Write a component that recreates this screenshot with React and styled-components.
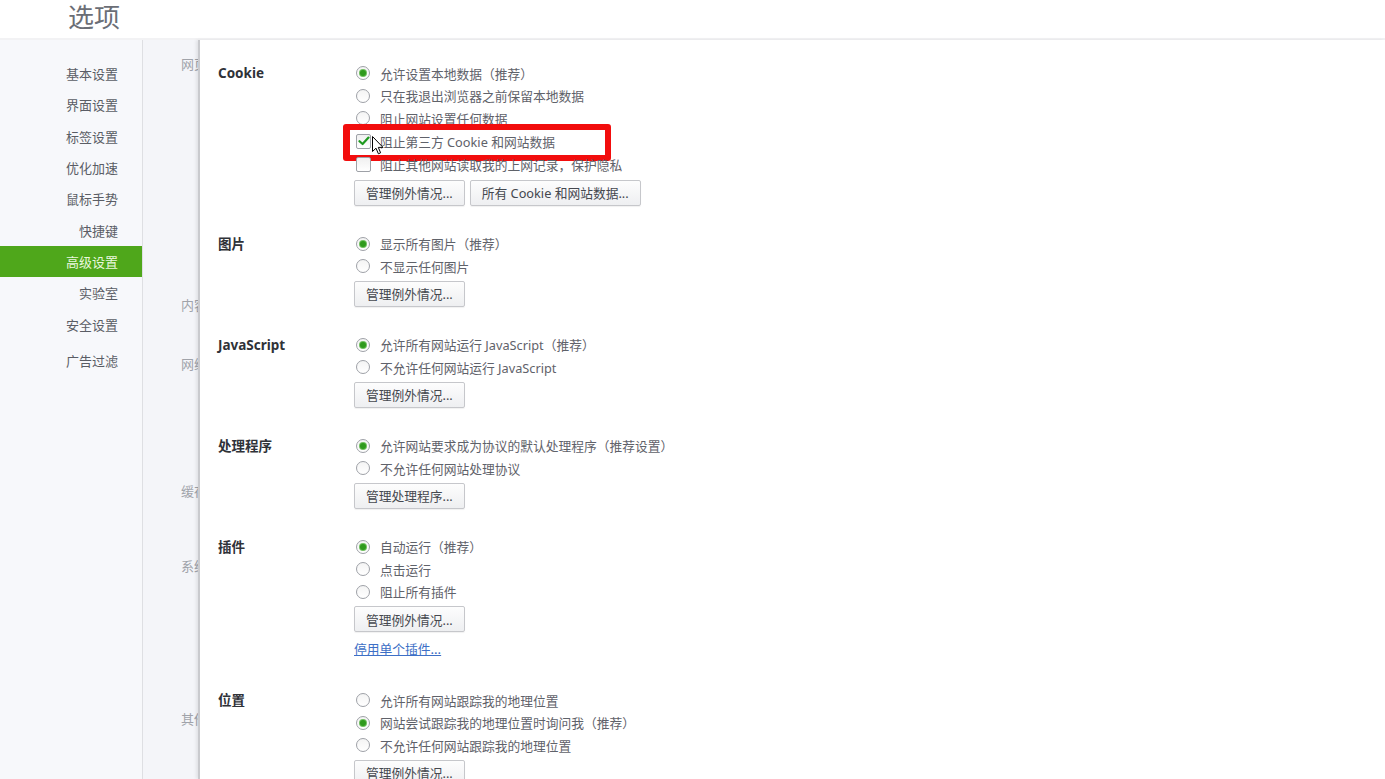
import React from "react";
import styled, { createGlobalStyle } from "styled-components";

const Global = createGlobalStyle`
  html, body { margin: 0; padding: 0; background: #fff; }
  body { font-family: "Noto Sans", "Noto Sans CJK SC", sans-serif; overflow: hidden; }
  * { box-sizing: border-box; }
`;

const Page = styled.div`
  width: 1385px;
  height: 779px;
  display: flex;
  flex-direction: column;
  overflow: hidden;
`;

const Header = styled.header`
  height: 40px;
  flex: none;
  border-bottom: 2px solid #f2f2f4;
  padding-left: 68px;
  display: flex;
  align-items: flex-start;
`;

const Title = styled.h1`
  margin: 0;
  font-weight: 400;
  font-size: 26px;
  line-height: 32px;
  color: #6b6e76;
  font-family: "Noto Sans CJK SC", sans-serif;
`;

const Body = styled.div`
  flex: 1;
  display: flex;
  min-height: 0;
`;

const Sidebar = styled.nav`
  width: 143px;
  flex: none;
  background: #f7f8fb;
  border-right: 1px solid #dedfe3;
  padding-top: 18px;
  display: flex;
  flex-direction: column;
`;

const NavItem = styled.div`
  height: 31.3px;
  flex: none;
  display: flex;
  align-items: center;
  justify-content: flex-end;
  padding-right: 24px;
  font-size: 13px;
  font-family: "Noto Sans CJK SC", sans-serif;
  color: ${(p) => (p.$active ? "#eaf7dd" : "#5a5d65")};
  background: ${(p) => (p.$active ? "#4fa71b" : "transparent")};
  margin-top: ${(p) => p.$gap || 0}px;
`;

const Middle = styled.div`
  width: 55px;
  flex: none;
  background: #f4f5f9;
  overflow: hidden;
  display: flex;
  flex-direction: column;
  padding-left: 38px;
`;

const MidLabel = styled.div`
  height: 20px;
  line-height: 20px;
  flex: none;
  white-space: nowrap;
  font-size: 13px;
  font-family: "Noto Sans CJK SC", sans-serif;
  color: #a0a3aa;
  margin-top: ${(p) => p.$gap}px;
`;

const Panel = styled.main`
  flex: 1;
  background: #fff;
  border-left: 2px solid #c9cace;
  box-shadow: -2px 0 3px rgba(0, 0, 0, 0.08);
  padding: 22px 0 0 18px;
  overflow: hidden;
  position: relative;
`;

const Section = styled.section`
  display: grid;
  grid-template-columns: 136px 1fr;
  margin-bottom: 27px;
`;

const SectionLabel = styled.div`
  font-weight: 700;
  font-size: 13.5px;
  color: #2f3238;
  height: 22.5px;
  line-height: 22.5px;
  font-family: "Noto Sans", "Noto Sans CJK SC", sans-serif;
`;

const Options = styled.div`
  display: flex;
  flex-direction: column;
  align-items: flex-start;
`;

const Row = styled.label`
  height: ${(p) => (p.$check ? 23.5 : 22.5)}px;
  display: flex;
  align-items: center;
  gap: ${(p) => (p.$check ? 9 : 10)}px;
  padding-left: 2px;
  font-size: 12.75px;
  color: #5f626a;
  white-space: nowrap;
  position: relative;
  font-family: "Noto Sans", "Noto Sans CJK SC", sans-serif;
`;

const RadioCircle = styled.span`
  width: 14px;
  height: 14px;
  border-radius: 50%;
  border: 1px solid #9ea1a7;
  background: linear-gradient(#f4f4f4, #ffffff);
  display: flex;
  align-items: center;
  justify-content: center;
  flex: none;
  &::after {
    content: "";
    width: 6px;
    height: 6px;
    border-radius: 50%;
    background: #2f9a1d;
    box-shadow: 0 0 0 1px #6fbf5e;
    display: ${(p) => (p.$on ? "block" : "none")};
  }
`;

const CheckBox = styled.span`
  width: 15px;
  height: 15px;
  border-radius: 2px;
  border: 1px solid #9ea1a7;
  background: linear-gradient(#f0f0f0, #ffffff);
  display: flex;
  align-items: center;
  justify-content: center;
  flex: none;
`;

const Buttons = styled.div`
  display: flex;
  gap: 5px;
  margin-top: 3px;
`;

const Button = styled.button`
  height: 26px;
  padding: 0 11px;
  border: 1px solid #c6c7cb;
  border-radius: 2px;
  background: linear-gradient(#fdfdfd, #eeeff1);
  box-shadow: 0 1px 1px rgba(0, 0, 0, 0.06);
  font-size: 12.75px;
  color: #45484f;
  font-family: "Noto Sans", "Noto Sans CJK SC", sans-serif;
  white-space: nowrap;
  cursor: default;
`;

const Link = styled.a`
  display: block;
  margin-top: 4px;
  height: 26px;
  line-height: 26px;
  font-size: 12.75px;
  color: #3d6fc6;
  text-decoration: underline;
  font-family: "Noto Sans CJK SC", sans-serif;
`;

const Highlight = styled.div`
  position: absolute;
  left: -11px;
  top: -6px;
  width: 268px;
  height: 37px;
  border: 6px solid #f20d0d;
  border-left-width: 7px;
  border-radius: 3px;
  pointer-events: none;
`;

const Cursor = styled.svg`
  position: absolute;
  left: 18px;
  top: 6px;
`;

const Radio = ({ on, children }) => (
  <Row>
    <RadioCircle $on={on} />
    {children}
  </Row>
);

const Check = ({ on, children, extra }) => (
  <Row $check>
    <CheckBox>
      {on && (
        <svg width="12" height="10" viewBox="0 0 12 10">
          <path d="M1.5 5.2 L4.6 8 L10.5 1.6" fill="none" stroke="#1f9a1f" strokeWidth="2.2" strokeLinecap="round" strokeLinejoin="round" />
        </svg>
      )}
    </CheckBox>
    {children}
    {extra}
  </Row>
);

const navItems = ["基本设置", "界面设置", "标签设置", "优化加速", "鼠标手势", "快捷键", "高级设置", "实验室", "安全设置"];

const midLabels = [
  ["网页", 14],
  ["内容", 221],
  ["网络", 39],
  ["缓存", 107],
  ["系统", 55],
  ["其他", 133],
];

export default function App() {
  return (
    <Page>
      <Global />
      <Header>
        <Title>选项</Title>
      </Header>
      <Body>
        <Sidebar>
          {navItems.map((t) => (
            <NavItem key={t} $active={t === "高级设置"}>{t}</NavItem>
          ))}
          <NavItem $gap={5}>广告过滤</NavItem>
        </Sidebar>
        <Middle>
          {midLabels.map(([t, g]) => (
            <MidLabel key={t} $gap={g}>{t}</MidLabel>
          ))}
        </Middle>
        <Panel>
          <Section>
            <SectionLabel>Cookie</SectionLabel>
            <Options>
              <Radio on>允许设置本地数据（推荐）</Radio>
              <Radio>只在我退出浏览器之前保留本地数据</Radio>
              <Radio>阻止网站设置任何数据</Radio>
              <Check
                on
                extra={
                  <>
                    <Highlight />
                    <Cursor width="12" height="19" viewBox="0 0 12 19">
                      <path d="M0.5 0.5 L0.5 15.5 L4 12.2 L6.4 17.8 L8.6 16.8 L6.3 11.4 L11 11.4 Z" fill="#fff" stroke="#000" strokeWidth="1" strokeLinejoin="round" />
                    </Cursor>
                  </>
                }
              >
                阻止第三方 Cookie 和网站数据
              </Check>
              <Check>阻止其他网站读取我的上网记录，保护隐私</Check>
              <Buttons>
                <Button>管理例外情况...</Button>
                <Button>所有 Cookie 和网站数据...</Button>
              </Buttons>
            </Options>
          </Section>
          <Section>
            <SectionLabel>图片</SectionLabel>
            <Options>
              <Radio on>显示所有图片（推荐）</Radio>
              <Radio>不显示任何图片</Radio>
              <Buttons>
                <Button>管理例外情况...</Button>
              </Buttons>
            </Options>
          </Section>
          <Section>
            <SectionLabel>JavaScript</SectionLabel>
            <Options>
              <Radio on>允许所有网站运行 JavaScript（推荐）</Radio>
              <Radio>不允许任何网站运行 JavaScript</Radio>
              <Buttons>
                <Button>管理例外情况...</Button>
              </Buttons>
            </Options>
          </Section>
          <Section>
            <SectionLabel>处理程序</SectionLabel>
            <Options>
              <Radio on>允许网站要求成为协议的默认处理程序（推荐设置）</Radio>
              <Radio>不允许任何网站处理协议</Radio>
              <Buttons>
                <Button>管理处理程序...</Button>
              </Buttons>
            </Options>
          </Section>
          <Section>
            <SectionLabel>插件</SectionLabel>
            <Options>
              <Radio on>自动运行（推荐）</Radio>
              <Radio>点击运行</Radio>
              <Radio>阻止所有插件</Radio>
              <Buttons>
                <Button>管理例外情况...</Button>
              </Buttons>
              <Link>停用单个插件...</Link>
            </Options>
          </Section>
          <Section>
            <SectionLabel>位置</SectionLabel>
            <Options>
              <Radio>允许所有网站跟踪我的地理位置</Radio>
              <Radio on>网站尝试跟踪我的地理位置时询问我（推荐）</Radio>
              <Radio>不允许任何网站跟踪我的地理位置</Radio>
              <Buttons>
                <Button>管理例外情况...</Button>
              </Buttons>
            </Options>
          </Section>
        </Panel>
      </Body>
    </Page>
  );
}
